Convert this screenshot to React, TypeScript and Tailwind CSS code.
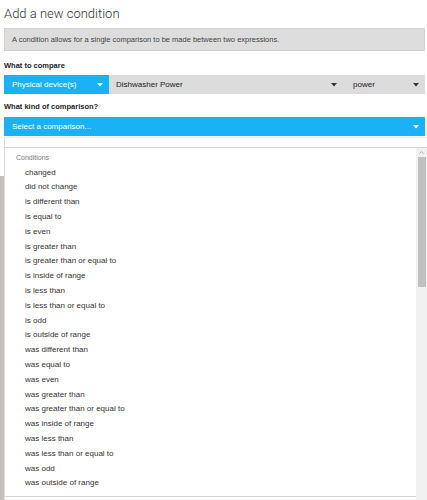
import { ChevronUp } from 'lucide-react';

const items = [
  'changed',
  'did not change',
  'is different than',
  'is equal to',
  'is even',
  'is greater than',
  'is greater than or equal to',
  'is inside of range',
  'is less than',
  'is less than or equal to',
  'is odd',
  'is outside of range',
  'was different than',
  'was equal to',
  'was even',
  'was greater than',
  'was greater than or equal to',
  'was inside of range',
  'was less than',
  'was less than or equal to',
  'was odd',
  'was outside of range',
];

function Caret({ color }: { color: string }) {
  return (
    <svg width="6" height="4" viewBox="0 0 6 4" className="shrink-0">
      <path d="M0 0 L6 0 L3 3.5 Z" fill={color} />
    </svg>
  );
}

export default function App() {
  return (
    <div className="relative w-[427px] h-[500px] overflow-hidden bg-white font-['Liberation_Sans',Arial,sans-serif] text-[#333]">
      <div className="pl-[4px] pr-[2px]">
        <h1 className="pt-[6px] h-[22px] leading-[16px] text-[13px] font-light font-['Roboto',sans-serif] text-[#333]">
          Add a new condition
        </h1>

        <div className="mt-[6px] h-[23px] flex items-center px-[7px] bg-[#dddddd] border border-[#d2d2d2] text-[7.5px] text-[#444]">
          A condition allows for a single comparison to be made between two expressions.
        </div>

        <div className="mt-[10px] h-[10px] leading-[10px] text-[7.5px] font-bold text-[#222]">What to compare</div>

        <div className="mt-[4px] h-[19px] flex text-[8px]">
          <div className="w-[105px] flex items-center justify-between pl-[8px] pr-[6px] bg-[#1ab2f5] text-white">
            <span>Physical device(s)</span>
            <Caret color="#ffffff" />
          </div>
          <div className="flex-1 flex items-center justify-between pl-[7px] pr-[2px] bg-[#dcdcdc] text-[#222]">
            <span>Dishwasher Power</span>
            <Caret color="#333333" />
          </div>
          <div className="w-[86px] flex items-center justify-between pl-[14px] pr-[6px] bg-[#dcdcdc] text-[#222]">
            <span>power</span>
            <Caret color="#333333" />
          </div>
        </div>

        <div className="mt-[8px] h-[10px] leading-[10px] text-[7.5px] font-bold text-[#222]">What kind of comparison?</div>

        <div className="mt-[5px] h-[19px] flex items-center justify-between pl-[8px] pr-[6px] bg-[#1ab2f5] text-white text-[8px]">
          <span>Select a comparison...</span>
          <Caret color="#ffffff" />
        </div>
      </div>

      <div className="mt-[40px] h-[400px] bg-[#c3c0bb]" />

      <div className="absolute left-[4px] right-0 top-[137px] h-[380px] bg-white border-l border-[#dcdcdc] border-t border-t-[#ececec]">
        <div className="h-[9px]" />
        <div className="flex border-t border-[#d4d4d4]">
          <div className="flex-1">
            <div className="pl-[11px] pt-[5px] h-[17.6px] leading-[10px] text-[7px] text-[#777]">Conditions</div>
            <ul className="pb-[5px] border-b border-[#d4d4d4]">
              {items.map((item) => (
                <li key={item} className="pl-[20px] h-[14.8px] leading-[14.8px] text-[8px] text-[#333]">
                  {item}
                </li>
              ))}
            </ul>
          </div>
          <div className="w-[11px] h-[360px] bg-[#f1f1f1] flex flex-col items-center">
            <ChevronUp size={7} strokeWidth={3} className="text-[#a3a3a3] mt-[1px]" />
            <div className="mt-[1px] w-[8px] h-[130px] bg-[#c1c1c1]" />
          </div>
        </div>
      </div>
    </div>
  );
}
